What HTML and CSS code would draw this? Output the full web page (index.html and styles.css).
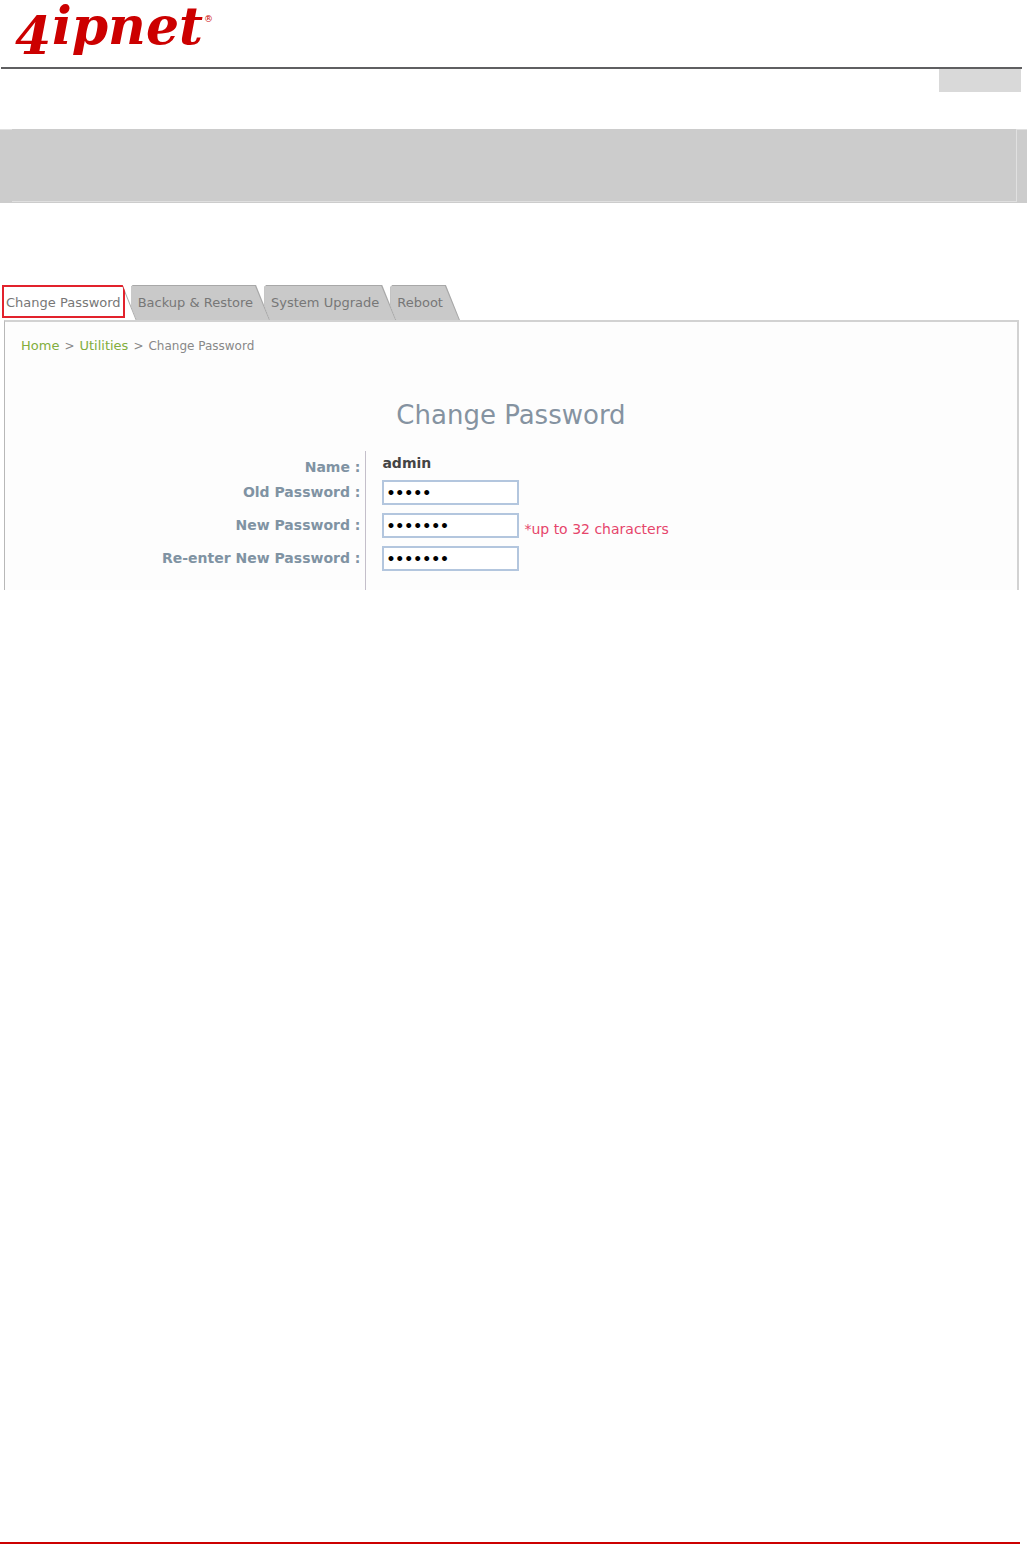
FILE: index.html
```html
<!DOCTYPE html>
<html lang="en">
<head>
    <meta charset="UTF-8">
    <meta name="viewport" content="width=device-width, initial-scale=1.0">
    <title>Change Password</title>
    <link rel="stylesheet" href="styles.css">
</head>
<body>
    <header class="header">
        <svg class="logo" width="200" height="64" viewBox="0 0 200 64" role="img" aria-label="4ipnet">
            <text x="0" y="54">4</text>
            <text x="37" y="44">ipnet</text>
            <text class="logo-mark" x="189" y="22">®</text>
        </svg>
    </header>
    <div class="header-tag"></div>

    <div class="band">
        <div class="band-inner"></div>
    </div>

    <main class="utilities">
        <nav>
            <ul class="tabs">
                <li class="tab active"><a href="#">Change Password</a></li>
                <li class="tab"><a href="#">Backup &amp; Restore</a></li>
                <li class="tab"><a href="#">System Upgrade</a></li>
                <li class="tab"><a href="#">Reboot</a></li>
            </ul>
        </nav>

        <section class="panel">
            <div class="breadcrumb">
                <a href="#">Home</a>
                <span>&gt;</span>
                <a href="#">Utilities</a>
                <span>&gt;</span>
                <span>Change Password</span>
            </div>

            <h1>Change Password</h1>

            <form class="form">
                <div class="row name-row">
                    <span class="label">Name :</span>
                    <div class="field"><strong>admin</strong></div>
                </div>
                <div class="row">
                    <label class="label" for="oldPassword">Old Password :</label>
                    <div class="field"><input type="password" id="oldPassword" value="admin"></div>
                </div>
                <div class="row">
                    <label class="label" for="newPassword">New Password :</label>
                    <div class="field">
                        <input type="password" id="newPassword" maxlength="32" value="newpass">
                        <span class="note">*up to 32 characters</span>
                    </div>
                </div>
                <div class="row last-row">
                    <label class="label" for="confirmPassword">Re-enter New Password :</label>
                    <div class="field"><input type="password" id="confirmPassword" maxlength="32" value="newpass"></div>
                </div>
            </form>
        </section>
    </main>

    <footer class="footer"></footer>
</body>
</html>
```

FILE: styles.css
```css
* {
    box-sizing: border-box;
}
body {
    margin: 0;
    min-height: 100vh;
    display: flex;
    flex-direction: column;
    font-family: "DejaVu Sans", Verdana, sans-serif;
    font-size: 14px;
    background-color: #fff;
    color: #444;
}
.header {
    height: 69px;
    margin: 0 5px 0 1px;
    padding-left: 14px;
    border-bottom: 2px solid #5f5f61;
}
.logo {
    display: block;
    overflow: visible;
    font-family: "DejaVu Serif", Georgia, serif;
    font-size: 52px;
    font-weight: bold;
    font-style: italic;
    fill: #cc0000;
}
.logo-mark {
    font-size: 9px;
    font-weight: normal;
    font-style: normal;
}
.header-tag {
    align-self: flex-end;
    width: 82px;
    height: 23px;
    margin-right: 6px;
    background-color: #d9d9d9;
}
.band {
    margin-top: 37px;
    padding: 0 10px 1px 12px;
    border-top: 1px solid #e0e0e0;
    background-color: #ccc;
}
.band-inner {
    height: 73px;
    margin-top: -1px;
    border-right: 1px solid #e0e0e0;
    border-bottom: 1px solid #e0e0e0;
    background-color: #ccc;
}

.utilities {
    margin: 82px 8px 0 2px;
}
.tabs {
    display: flex;
    margin: 0;
    padding: 0;
    list-style: none;
    font-size: 13px;
}
/* outer shape is the edge colour, ::before is the fill */
.tab {
    position: relative;
    height: 35px;
    margin-left: -6px;
    padding: 0 17px 0 7px;
    background-color: #a8a8a8;
    clip-path: polygon(0 2px, 2px 0, calc(100% - 14px) 0, 100% 100%, 6px 100%, 0 20px);
}
.tab::before {
    content: "";
    position: absolute;
    inset: 1px 1px 0 0;
    background-color: #c9c9c9;
    clip-path: polygon(0 0, calc(100% - 14px) 0, 100% 100%, 0 100%);
}
.tab a {
    position: relative;
    display: block;
    line-height: 36px;
    color: #777;
    text-decoration: none;
    white-space: nowrap;
}
.tab.active {
    margin-left: 0;
    padding: 0 12px 0 0;
    clip-path: polygon(0 0, calc(100% - 14px) 0, 100% 100%, 0 100%);
}
.tab.active::before {
    inset: 0 1px 0 0;
    background-color: #fff;
}
.tab.active a {
    height: 33px;
    padding: 0 2px;
    border: 2px solid #e2222c;
    line-height: 32px;
}

.panel {
    margin-left: 2px;
    padding-top: 14px;
    border: 2px solid #d2d2d2;
    border-left: 1px solid #b8b8b8;
    border-bottom: none;
    background-color: #fdfdfd;
}
.breadcrumb {
    display: flex;
    align-items: baseline;
    gap: 5px;
    padding-left: 16px;
    line-height: 20px;
    font-size: 12px;
    color: #888;
}
.breadcrumb a {
    font-size: 13px;
    color: #82ae3c;
    text-decoration: none;
}
h1 {
    margin: 43px 0 20px;
    text-align: center;
    font-size: 26px;
    font-weight: normal;
    line-height: 32px;
    color: #8593a1;
}
.row {
    display: grid;
    grid-template-columns: 5fr 9fr;
    height: 33px;
    line-height: 33px;
}
.label {
    padding-right: 5px;
    border-right: 1px solid #c4bfca;
    text-align: right;
    font-weight: bold;
    color: #8093a3;
}
.field {
    display: flex;
    align-items: center;
    gap: 5px;
    padding-left: 16px;
}
.name-row {
    height: 25px;
}
.name-row .field {
    align-items: flex-start;
    line-height: 25px;
}
.last-row {
    height: 48px;
}
.last-row .field {
    height: 33px;
}
.field input {
    width: 137px;
    height: 25px;
    padding: 0 2px;
    border: 2px solid #b3c6de;
    background-color: #fff;
    font-family: "DejaVu Sans", Verdana, sans-serif;
    font-size: 14px;
    font-weight: bold;
    color: #000;
}
.note {
    padding-top: 8px;
    line-height: 25px;
    color: #e6456b;
}

.footer {
    margin-top: auto;
    margin-right: 7px;
    border-bottom: 2px solid #cc0000;
}
```
